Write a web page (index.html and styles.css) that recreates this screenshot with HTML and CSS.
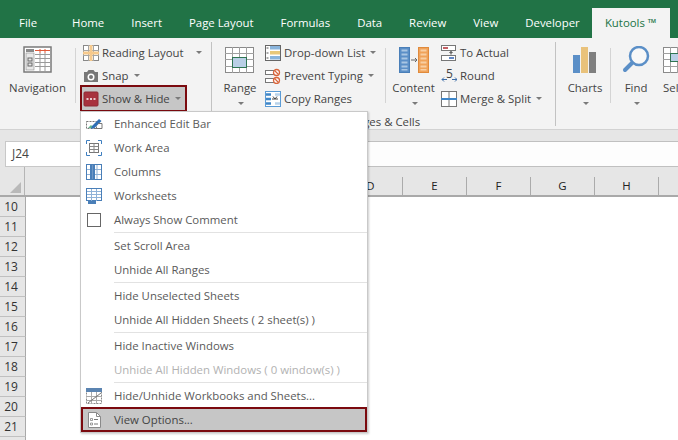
FILE: index.html
```html
<!DOCTYPE html>
<html lang="en">
<head>
<meta charset="utf-8">
<title>Kutools</title>
<link rel="stylesheet" href="styles.css">
</head>
<body>
<div class="app">
  <nav class="tabs">
    <span class="tab tab-file">File</span>
    <span class="tab">Home</span>
    <span class="tab">Insert</span>
    <span class="tab">Page Layout</span>
    <span class="tab">Formulas</span>
    <span class="tab">Data</span>
    <span class="tab">Review</span>
    <span class="tab">View</span>
    <span class="tab">Developer</span>
    <span class="tab tab-active">Kutools ™</span>
  </nav>

  <section class="ribbon">
    <div class="group group-view">
      <div class="group-row">
        <div class="large large-nav">
          <svg width="30" height="28" viewBox="0 0 30 28"><rect x="1" y="1" width="27" height="25" fill="#fff" stroke="#7a7a7a" stroke-width="1.5"/><rect x="3" y="3" width="8" height="3" fill="#8a8a8a"/><rect x="3" y="7" width="8" height="17" fill="#e8e8e8" stroke="#8a8a8a" stroke-width=".6"/><rect x="5" y="12" width="4" height="3" fill="none" stroke="#666"/><rect x="5" y="17" width="4" height="3" fill="none" stroke="#666"/><path d="M12 4.500h15" stroke="#e05a3a" stroke-width="1"/><path d="M17 3v4M22 3v4" stroke="#e05a3a" stroke-width="1"/><path d="M12 8.500h15M12 12.500h15M12 16.500h15M12 20.500h15M17 7v18M22 7v18" stroke="#9a9a9a" stroke-width="1"/></svg>
          <span class="large-label">Navigation</span>
        </div>
        <div class="vsep"></div>
        <div class="smalls smalls-view">
          <div class="small">
            <svg class="sicon" width="16" height="16" viewBox="0 0 16 16"><rect x=".5" y=".5" width="15" height="15" fill="#fff" stroke="#888"/><path d="M5.500 0v16M10.500 0v16M0 5.500h16M0 10.500h16" stroke="#a5a5a5"/><path d="M8 0v16M0 8h16" stroke="#f6c98c" stroke-width="3"/></svg>
            <span>Reading Layout</span><i class="caret caret-far"></i>
          </div>
          <div class="small">
            <svg class="sicon" width="16" height="16" viewBox="0 0 16 16"><path d="M1 4h3l1.500-2h5L12 4h3v10H1z" fill="#777"/><circle cx="8" cy="9" r="3.500" fill="#fff"/><circle cx="8" cy="9" r="2" fill="#777"/></svg>
            <span>Snap</span><i class="caret"></i>
          </div>
          <div class="small small-hot">
            <svg class="sicon" width="16" height="16" viewBox="0 0 16 16"><rect x="1" y="1" width="14" height="14" rx="1" fill="#a8323e" stroke="#8e2a34"/><path d="M3.500 8h2M7 8h2M10.500 8h2" stroke="#fff" stroke-width="1.500"/></svg>
            <span>Show &amp; Hide</span><i class="caret"></i>
          </div>
        </div>
      </div>
    </div>
    <div class="gsep"></div>
    <div class="group group-cells">
      <div class="group-row">
        <div class="large large-range">
          <svg width="30" height="28" viewBox="0 -1 30 28"><rect x=".5" y=".5" width="28" height="25" fill="#fff" stroke="#8a8a8a"/><path d="M0 6.500h29M0 12.500h29M0 19.500h29M7.500 0v26M21.500 0v26M14.500 0v26" stroke="#a0a0a0"/><rect x="7.500" y="10.500" width="14" height="10" fill="#b9cfe6" stroke="#2f7552"/></svg>
          <span class="large-label">Range</span><i class="caret caret-low"></i>
        </div>
        <div class="smalls smalls-range">
          <div class="small">
            <svg class="sicon" width="16" height="16" viewBox="0 0 16 16"><rect x=".5" y=".5" width="15" height="15" fill="#fff" stroke="#666"/><rect x="5" y="1" width="10" height="3.500" fill="#89b4dc"/><rect x="5" y="6" width="10" height="3.500" fill="#e8c87a"/><rect x="5" y="11" width="10" height="3.500" fill="#89b4dc"/><path d="M1.500 3h2M1.500 8h2M1.500 13h2" stroke="#555"/></svg>
            <span>Drop-down List</span><i class="caret"></i>
          </div>
          <div class="small">
            <svg class="sicon" width="16" height="16" viewBox="0 0 16 16"><rect x=".5" y="2.500" width="9" height="4" fill="#fff" stroke="#777"/><rect x=".5" y="10.500" width="9" height="4" fill="#fff" stroke="#777"/><circle cx="11.500" cy="4.500" r="3" fill="#fff" stroke="#d9663c" stroke-width="1.300"/><circle cx="11.500" cy="12.500" r="3" fill="#fff" stroke="#d9663c" stroke-width="1.300"/><path d="M9.500 2.500l4 4M9.500 10.500l4 4" stroke="#d9663c" stroke-width="1.200"/></svg>
            <span>Prevent Typing</span><i class="caret"></i>
          </div>
          <div class="small">
            <svg class="sicon" width="16" height="16" viewBox="0 0 16 16"><rect x=".5" y=".5" width="15" height="15" fill="#fff" stroke="#5b9bd5"/><path d="M1 3.500h5M1 8h5M1 12.500h5" stroke="#3f86c8" stroke-width="2.400"/><path d="M10 3.500h5M10 12.500h5" stroke="#b8d2ea" stroke-width="2.400"/><path d="M7 8h6M8 5.500L10 8l2-2.500" fill="none" stroke="#444"/></svg>
            <span>Copy Ranges</span>
          </div>
        </div>
        <div class="vsep"></div>
        <div class="large large-content">
          <svg width="30" height="28" viewBox="0 -1 30 28"><rect x=".5" y=".5" width="10" height="25" fill="#5b8fc7" stroke="#4a7fb8"/><path d="M2.500 2.500h6v2h-6zM2.500 6.500h6v2h-6zM2.500 10.500h6v2h-6zM2.500 14.500h6v2h-6zM2.500 18.500h6v2h-6zM2.500 22h6v1.500h-6z" fill="#a9c6e3"/><rect x="19.500" y=".5" width="10" height="25" fill="#f0a35a" stroke="#e08a3c"/><path d="M21.500 2.500h6v2h-6zM21.500 6.500h6v2h-6zM21.500 10.500h6v2h-6zM21.500 14.500h6v2h-6zM21.500 18.500h6v2h-6zM21.500 22h6v1.500h-6z" fill="#f8cfa3"/><path d="M12 13h6M16 11l2 2-2 2" fill="none" stroke="#666"/></svg>
          <span class="large-label">Content</span><i class="caret caret-low"></i>
        </div>
        <div class="smalls smalls-content">
          <div class="small">
            <svg class="sicon" width="16" height="16" viewBox="0 0 16 16"><rect x=".5" y=".5" width="14" height="5" fill="#fff" stroke="#777"/><path d="M2 3h5" stroke="#b02a30" stroke-width="1.500"/><rect x=".5" y="10.500" width="14" height="5" fill="#fff" stroke="#777"/><path d="M8 13h5" stroke="#2f5fb0" stroke-width="1.500"/><path d="M10 9.500V6.500M8.500 8l1.500-1.500L11.500 8" fill="none" stroke="#333"/></svg>
            <span>To Actual</span>
          </div>
          <div class="small">
            <svg class="sicon" width="16" height="22" viewBox="0 -3 16 22"><path d="M1 11.500h5M1 11.500l2-2M1 11.500l2 2M11 11.500h5M16 11.500l-2-2M16 11.500l-2 2" fill="none" stroke="#3f6ea8"/><text x="5" y="9.500" class="five">5</text></svg>
            <span>Round</span>
          </div>
          <div class="small">
            <svg class="sicon" width="16" height="16" viewBox="0 0 16 16"><rect x=".5" y=".5" width="15" height="15" fill="#fff" stroke="#777"/><path d="M8 0v16" stroke="#777"/><path d="M0 8h16" stroke="#3f86c8" stroke-width="2"/></svg>
            <span>Merge &amp; Split</span><i class="caret"></i>
          </div>
        </div>
      </div>
      <div class="group-name">Ranges &amp; Cells</div>
    </div>
    <div class="gsep"></div>
    <div class="large large-charts">
      <svg width="24" height="28" viewBox="0 0 24 28"><rect x="0" y="9" width="7" height="18" fill="#5b8fc7"/><rect x="8" y="1" width="7" height="26" fill="#e9c27b"/><rect x="16" y="6" width="7" height="21" fill="#7f7f7f"/></svg>
      <span class="large-label">Charts</span><i class="caret caret-low"></i>
    </div>
    <div class="vsep"></div>
    <div class="large large-find">
      <svg width="28" height="28" viewBox="0 0 28 28"><circle cx="17" cy="10" r="9" fill="#f8f8f8" stroke="#5b8fc7" stroke-width="2.500"/><path d="M10 17l-7 7" stroke="#5b8fc7" stroke-width="4" stroke-linecap="round"/></svg>
      <span class="large-label">Find</span><i class="caret caret-low"></i>
    </div>
    <div class="large large-select">
      <svg width="30" height="28" viewBox="0 -1 30 28"><rect x=".5" y=".5" width="28" height="25" fill="#fff" stroke="#8a8a8a"/><path d="M0 6.500h29M0 12.500h29M0 19.500h29M7.500 0v26M14.500 0v26" stroke="#a0a0a0"/><rect x="7.500" y="6.500" width="22" height="8" fill="#b9cfe6" stroke="#2f7552"/></svg>
      <span class="large-label">Sel</span>
    </div>
  </section>

  <div class="strip"></div>

  <div class="formula">
    <div class="namebox">J24</div>
    <div class="formula-input"></div>
  </div>

  <div class="sheet">
    <div class="col-head">
      <div class="corner"><i class="corner-tri"></i></div>
      <div class="col col-wide"></div>
      <div class="col col-mid"></div>
      <div class="col">D</div>
      <div class="col">E</div>
      <div class="col">F</div>
      <div class="col">G</div>
      <div class="col">H</div>
    </div>
    <div class="row-head">10</div>
    <div class="row-head">11</div>
    <div class="row-head">12</div>
    <div class="row-head">13</div>
    <div class="row-head">14</div>
    <div class="row-head">15</div>
    <div class="row-head">16</div>
    <div class="row-head">17</div>
    <div class="row-head">18</div>
    <div class="row-head">19</div>
    <div class="row-head">20</div>
    <div class="row-head">21</div>
    <div class="row-head"></div>
  </div>

  <div class="menu">
    <div class="item">
      <svg class="micon" width="17" height="12" viewBox="0 0 17 12"><path d="M.5 3.500h10v7H.5z" fill="#fff" stroke="#777" stroke-dasharray="2 1"/><path d="M2 10l3-3 3 3z" fill="#5fb58c"/><path d="M6 8l7-7 2.500 2-7 7-3.500 1z" fill="#2f6fb5"/><path d="M12 5.500h4v5H9" fill="none" stroke="#777"/></svg>
      <span>Enhanced Edit Bar</span>
    </div>
    <div class="item">
      <svg class="micon" width="16" height="16" viewBox="0 0 16 16"><path d="M.5 4V.5H4M12 .5h3.500V4M15.500 12v3.500H12M4 15.500H.5V12" fill="none" stroke="#3f7fc0"/><rect x="3.500" y="3.500" width="9" height="9" fill="#fff" stroke="#777"/><path d="M3.500 6.500h9M3.500 9.500h9M8 3.500v9" stroke="#888"/></svg>
      <span>Work Area</span>
    </div>
    <div class="item">
      <svg class="micon" width="16" height="16" viewBox="0 0 16 16"><rect x=".5" y=".5" width="15" height="15" fill="#fff" stroke="#4a7fb8"/><path d="M1 5.500h14M1 10.500h14M11 1v14" stroke="#8fb2d8"/><rect x="4" y="1" width="5" height="14" fill="#4a7fb8"/><path d="M6.500 1v14" stroke="#6f97c5"/></svg>
      <span>Columns</span>
    </div>
    <div class="item">
      <svg class="micon" width="16" height="16" viewBox="0 0 16 16"><rect x=".5" y=".5" width="15" height="12" fill="#fff" stroke="#4a7fb8"/><path d="M1 3.500h14M1 6.500h14M1 9.500h14M5.500 1v12M10.500 1v12" stroke="#8fb2d8"/><rect x="2" y="13" width="8" height="3" fill="#4a7fb8"/></svg>
      <span>Worksheets</span>
    </div>
    <div class="item">
      <span class="check"></span>
      <span>Always Show Comment</span>
    </div>
    <div class="sep"></div>
    <div class="item"><span>Set Scroll Area</span></div>
    <div class="item"><span>Unhide All Ranges</span></div>
    <div class="sep"></div>
    <div class="item"><span>Hide Unselected Sheets</span></div>
    <div class="item"><span>Unhide All Hidden Sheets ( 2 sheet(s) )</span></div>
    <div class="sep"></div>
    <div class="item"><span>Hide Inactive Windows</span></div>
    <div class="item item-off"><span>Unhide All Hidden Windows ( 0 window(s) )</span></div>
    <div class="sep"></div>
    <div class="item">
      <svg class="micon" width="16" height="16" viewBox="0 0 16 16"><rect x=".5" y=".5" width="15" height="15" fill="#fff" stroke="#8a8a8a" stroke-dasharray="2 1"/><rect x="0" y="0" width="16" height="4" fill="#5b84b1"/><path d="M0 8.500h16M0 12.500h16M5.500 4v12M10.500 4v12" stroke="#aaa"/><path d="M2 15L15 5" stroke="#777"/></svg>
      <span>Hide/Unhide Workbooks and Sheets...</span>
    </div>
    <div class="item item-hot">
      <svg class="micon" width="13" height="16" viewBox="0 0 13 16"><path d="M.5.500h8l4 4v11H.5z" fill="#fff" stroke="#8a8a8a"/><path d="M8.500.500v4h4" fill="none" stroke="#8a8a8a"/><path d="M2.500 6.500h2v2h-2zM2.500 11h2v2h-2z" fill="none" stroke="#777" stroke-width=".7"/><path d="M6 7.500h4M6 12h4" stroke="#777"/></svg>
      <span>View Options...</span>
    </div>
  </div>
</div>
</body>
</html>
```

FILE: styles.css
```css
* { box-sizing: border-box; }
html, body { margin: 0; padding: 0; }
body { width: 678px; height: 440px; overflow: hidden; background: #fff; font-family: "Open Sans", "Noto Sans", sans-serif; font-size: 11.4px; color: #444; }
.app { position: relative; width: 678px; height: 440px; overflow: hidden; }

.tabs { display: flex; align-items: flex-end; gap: 27px; height: 38px; padding-left: 19px; background: #217346; }
.tab { flex: none; height: 30px; line-height: 30px; color: #fff; white-space: nowrap; }
.tab-file { margin-right: 8px; }
.tab-active { margin-left: -15px; background: #f3f3f3; color: #217346; width: 78px; text-align: center; }

.ribbon { display: flex; height: 92px; background: #f3f3f3; border-bottom: 1px solid #d2d2d2; }
.group { display: flex; flex-direction: column; flex: none; }
.group-row { display: flex; height: 76px; }
.group-view { width: 211px; }
.group-cells { width: 343px; }
.group-name { padding-right: 4px; text-align: center; line-height: 15px; color: #444; }
.gsep { flex: none; width: 1px; height: 84px; margin: 4px 0 0; background: #c2c2c2; }
.vsep { flex: none; width: 1px; height: 55px; margin-top: 10px; background: #d4d4d4; }

.large { display: flex; flex-direction: column; align-items: center; flex: none; padding-top: 8px; }
.large svg { display: block; flex: none; }
.large-label { display: block; margin-top: 6px; line-height: 16px; white-space: nowrap; }
.large-nav { width: 75px; }
.large-range { width: 56px; }
.large-content { width: 55px; }
.large-charts { width: 54px; padding-left: 4px; }
.large-find { width: 50px; }
.large-select { width: 34px; overflow: hidden; align-items: flex-start; padding-left: 2px; }

.smalls { display: flex; flex-direction: column; flex: none; padding-top: 3px; }
.smalls-view { width: 135px; margin-left: 6px; }
.smalls-range { width: 121px; margin-left: -4px; }
.smalls-content { width: 115px; margin-left: -1px; }
.small { display: flex; align-items: center; gap: 3px; height: 23px; white-space: nowrap; padding-left: 1px; }
.sicon { flex: none; }
.small-hot { width: 103px; background: #c6c6c6; outline: 2px solid #7b0a0f; }
.five { font-size: 12px; fill: #444; font-family: "Open Sans", sans-serif; }

.caret { display: inline-block; flex: none; margin-left: 2px; width: 0; height: 0; border-left: 3px solid transparent; border-right: 3px solid transparent; border-top: 3px solid #7a7a7a; }
.caret-far { margin-left: 9px; }
.caret-low { margin-top: 6px; }

.strip { height: 11px; background: #e6e6e6; }
.formula { display: flex; gap: 4px; height: 26px; padding-left: 5px; background: #e6e6e6; }
.namebox { width: 150px; height: 26px; line-height: 24px; padding-left: 6px; font-size: 12px; background: #fff; border: 1px solid #c8c8c8; color: #444; }
.formula-input { flex: 1; height: 26px; background: #fdfdfd; border-top: 1px solid #c0c0c0; border-bottom: 1px solid #c0c0c0; }

.sheet { display: flex; flex-direction: column; }
.col-head { display: flex; align-items: flex-end; height: 30px; background: #e6e6e6; border-bottom: 2px solid #a9a9a9; }
.corner { position: relative; width: 25px; height: 28px; flex: none; border-right: 1px solid #b5b5b5; }
.corner-tri { position: absolute; right: 3px; bottom: 2px; width: 0; height: 0; border-left: 11px solid transparent; border-bottom: 11px solid #b9b9b9; }
.col { flex: none; width: 64px; height: 18px; line-height: 18px; text-align: center; color: #222; border-right: 1px solid #ababab; }
.col-wide { width: 186px; }
.col-mid { width: 128px; }
.row-head { width: 26px; height: 20px; line-height: 19px; padding-right: 3px; text-align: center; font-size: 12px; background: #e6e6e6; color: #333; border-right: 1px solid #a9a9a9; border-bottom: 1px solid #c0c0c0; }

.menu { position: absolute; left: 80px; top: 111px; width: 288px; height: 322px; background: #fff; border: 1px solid #c9c9c9; box-shadow: 1px 1px 2px rgba(0, 0, 0, .2); }
.item { position: relative; display: flex; align-items: center; height: 24px; padding: 0 0 2px 33px; color: #5a5a5a; white-space: nowrap; }
.micon { position: absolute; left: 5px; top: 50%; transform: translateY(-50%); }
.check { position: absolute; left: 6px; top: 5px; width: 14px; height: 14px; background: #fff; border: 1px solid #666; }
.sep { height: 2px; margin-left: 33px; background: linear-gradient(#e2e2e2 50%, #fff 50%); }
.item-off { color: #b2b2b2; }
.item-hot { height: 25px; margin-top: -1px; padding: 0 0 0 31px; background: #c6c6c6; border: 2px solid #7b0a0f; color: #444; }
```
